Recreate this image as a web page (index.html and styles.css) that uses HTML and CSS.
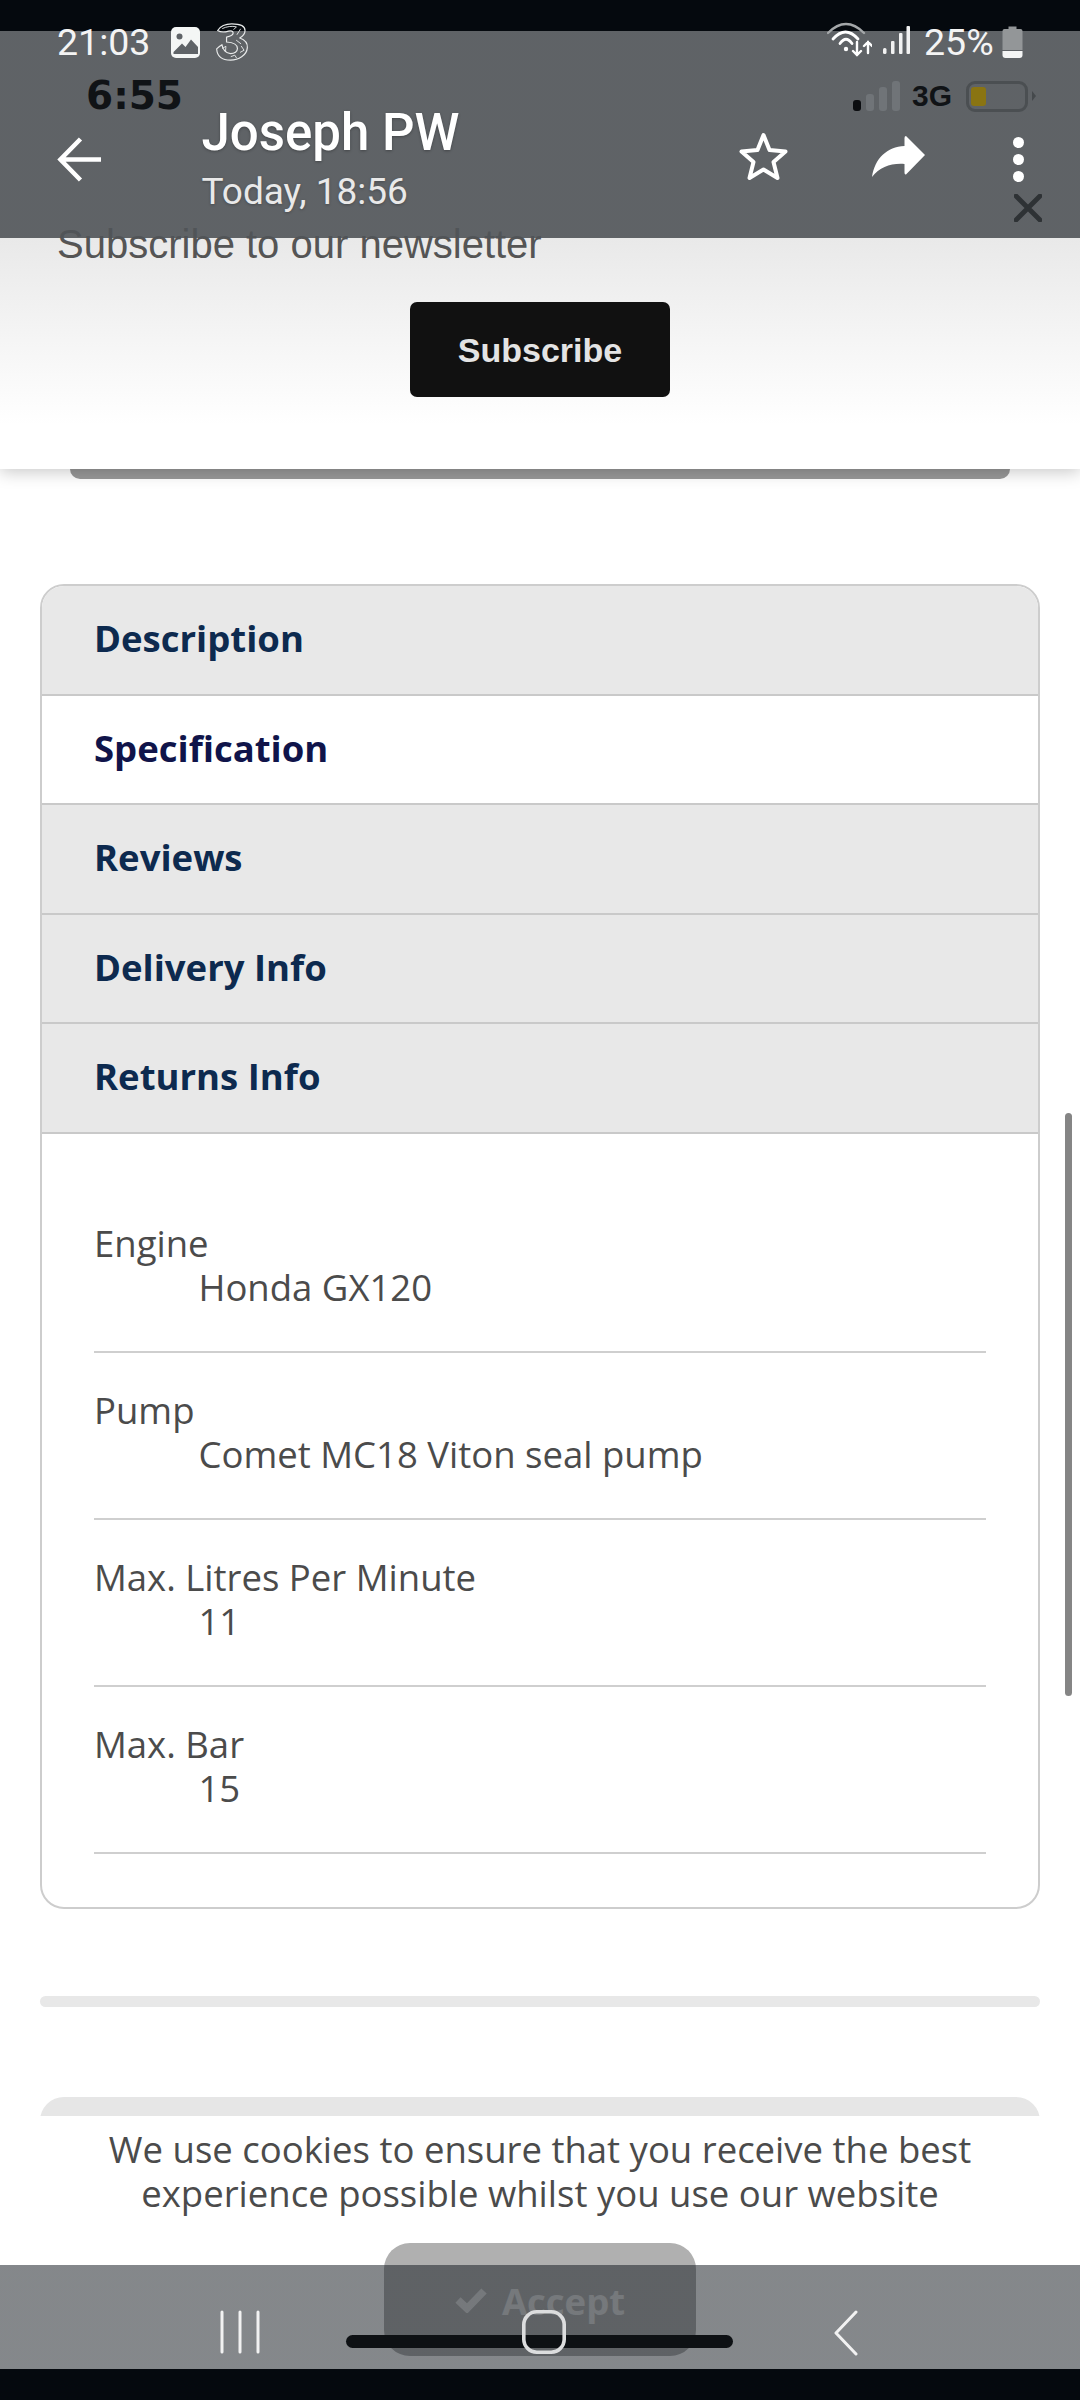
FILE: index.html
```html
<!DOCTYPE html>
<html lang="en">
<head>
<meta charset="utf-8">
<title>Specification</title>
<link rel="stylesheet" href="styles.css">
</head>
<body>
<div class="screen">
  <main class="page">
    <section class="newsletter">
      <p class="newsletter-title">Subscribe to our newsletter</p>
      <button class="subscribe">Subscribe</button>
    </section>
    <div class="cut-bar"></div>
    <section class="card">
      <div class="tab">Description</div>
      <div class="tab tab-active">Specification</div>
      <div class="tab">Reviews</div>
      <div class="tab">Delivery Info</div>
      <div class="tab">Returns Info</div>
      <dl class="specs">
        <div class="spec"><dt>Engine</dt><dd>Honda GX120</dd></div>
        <div class="spec"><dt>Pump</dt><dd>Comet MC18 Viton seal pump</dd></div>
        <div class="spec"><dt>Max. Litres Per Minute</dt><dd>11</dd></div>
        <div class="spec"><dt>Max. Bar</dt><dd>15</dd></div>
      </dl>
    </section>
    <div class="thin-bar"></div>
    <div class="next-card"></div>
  </main>

  <div class="scrollbar"></div>

  <header class="chrome">
    <div class="status">
      <span class="clock">21:03</span>
      <svg class="ic-gallery" viewBox="0 0 29 31"><rect width="29" height="31" rx="5" fill="#f4f6f5"/><circle cx="8.5" cy="9.5" r="3" fill="#5f6367"/><path d="M2.5 25 L11 16.5 L14.5 20 L20 12.5 L27 20 V27 H2.5Z" fill="#5f6367"/></svg>
      <svg class="ic-three" viewBox="-2 -2 100 114" fill="none" stroke="#e8eaea" stroke-width="3.6" stroke-linecap="round" stroke-linejoin="round"><path d="M3 20 C12 6 28 0 46 0 C66 0 86 2 86 20 C86 30 78 38 70 43 C84 48 94 58 93 72 C91 96 66 110 42 110 C20 110 2 102 0 76 C6 70 11 66 16 63 C18 78 28 90 42 90 C54 90 63 84 63 75 C63 62 46 56 30 55 L30 40 C40 38 50 36 50 28 C50 22 44 20 36 22 C26 25 12 26 3 20Z"/><path d="M18 14 C30 8 46 6 60 9 L52 17 M72 16 L62 32 M18 74 L28 68 L27 82 M60 50 L73 60 M44 99 L55 95 L60 103 M75 68 L83 80 L72 86" stroke-width="2.8"/></svg>
      <span class="status-right">
        <svg class="ic-wifi" viewBox="0 0 45 35" fill="none" stroke-linecap="round"><path d="M1 11 Q19 -7 37 11" stroke="#a4a7a9" stroke-width="2.4"/><path d="M6 17 Q18.500 3 31 17" stroke="#fff" stroke-width="2.8"/><path d="M13 21.500 Q19 13 25 21.500" stroke="#fff" stroke-width="2.8"/><circle cx="19" cy="27" r="2.200" fill="#fff"/><path d="M30 20 V33 M26 29 L30 33 L34 29 M41 31 V20 M37 24 L41 20 L45 24" stroke="#fff" stroke-width="2.400"/></svg>
        <svg class="ic-signal" viewBox="0 0 27 28" fill="#f2f2f2"><rect x="0" y="22" width="3.500" height="6" rx="1.500"/><rect x="8" y="15" width="3.500" height="13" rx="1"/><rect x="16" y="7" width="3.500" height="21" rx="1"/><rect x="23.500" y="0" width="3.500" height="28" rx="1"/></svg>
        <span class="percent">25%</span>
        <svg class="ic-battery" viewBox="0 0 20 32"><path d="M6 0.5 H14 V3 H18 Q20 3 20 5 V24 H0 V5 Q0 3 2 3 H6Z" fill="#939698"/><path d="M0 25 H20 V29 Q20 32 17 32 H3 Q0 32 0 29Z" fill="#f4f5f5"/></svg>
      </span>
    </div>
    <div class="status-under">
      <span class="clock-under">6:55</span>
      <span class="under-right">
        <span class="bars">
          <i class="bar bar-on"></i><i class="bar bar-2"></i><i class="bar bar-3"></i><i class="bar bar-4"></i>
        </span>
        <span class="net">3G</span>
        <span class="batt"><i class="batt-fill"></i></span>
        <i class="batt-nub"></i>
      </span>
    </div>
    <div class="appbar">
      <svg class="ic-back" viewBox="0 0 46 46" fill="none" stroke="#fff" stroke-width="4.6"><path d="M45 23 H4 M24 2 L3.5 23 L24 44"/></svg>
      <div class="sender">
        <div class="sender-name">Joseph PW</div>
        <div class="sender-time">Today, 18:56</div>
      </div>
      <div class="actions">
        <svg class="ic-star" viewBox="0 0 50 48" fill="none" stroke="#fff" stroke-width="4" stroke-linejoin="round"><path d="M25 3 L31 18 L47 19.5 L35 30 L39 46 L25 37.5 L11 46 L15 30 L3 19.5 L19 18Z"/></svg>
        <svg class="ic-share" viewBox="0 0 54 41" fill="#fff"><path d="M35 0 L54 19 L35 38.500 Q33.500 39 33.500 36.500 V28 C20 27 9 31 1 41 C4 22 16 11 33.500 10 V2 Q33.500 0 35 0Z"/></svg>
        <span class="dots"><i></i><i></i><i></i></span>
      </div>
    </div>
    <svg class="ic-close" viewBox="0 0 28 28" fill="none" stroke="#2e3235" stroke-width="4.8" stroke-linecap="round"><path d="M2 2 L26 26 M26 2 L2 26"/></svg>
  </header>

  <section class="cookie">
    <p class="cookie-text">We use cookies to ensure that you receive the best experience possible whilst you use our website</p>
    <button class="accept">
      <svg class="ic-tick" viewBox="0 0 32 25" fill="none" stroke="#e0e0e0" stroke-width="7.500"><path d="M3 12 L12 20.500 L29 3"/></svg>
      <span>Accept</span>
    </button>
  </section>

  <nav class="navbar">
    <div class="nav-icons">
      <svg class="ic-recent" viewBox="0 0 40 44" stroke="#f2f2f2" stroke-width="3" stroke-linecap="round"><path d="M2 2 V42 M20 2 V42 M38 2 V42"/></svg>
      <svg class="ic-home" viewBox="0 0 44 44" fill="none" stroke="#dcddde" stroke-width="3.600"><rect x="1.800" y="1.800" width="40.400" height="40.400" rx="13"/></svg>
      <svg class="ic-chev" viewBox="0 0 24 46" fill="none" stroke="#f2f2f2" stroke-width="3" stroke-linecap="round" stroke-linejoin="round"><path d="M22 2 L2 23 L22 44"/></svg>
    </div>
    <div class="pill"></div>
  </nav>
</div>
</body>
</html>
```
FILE: styles.css
```css
* { box-sizing: border-box; }
html, body { margin: 0; padding: 0; background: #05090e; }
.screen {
  position: relative;
  width: 1080px;
  height: 2400px;
  overflow: hidden;
  background: #fff;
  font-family: "Open Sans", sans-serif;
}

/* page */
.page { display: flex; flex-direction: column; }
.newsletter {
  position: relative;
  z-index: 1;
  height: 469px;
  padding-top: 220px;
  display: flex;
  flex-direction: column;
  align-items: flex-start;
  background: linear-gradient(#e9e9e9 238px, #fff 425px);
  box-shadow: 0 3px 16px rgba(0, 0, 0, .22);
}
.newsletter-title {
  margin: 0 0 0 57px;
  font: 40px/48px "Liberation Sans", sans-serif;
  color: #555;
}
.subscribe {
  align-self: center;
  margin: 34px 0 0 0;
  padding: 2px 0 0;
  width: 260px;
  height: 95px;
  border: 0;
  border-radius: 7px;
  background: #111;
  color: #e4e4e4;
  font: bold 34px "Liberation Sans", sans-serif;
}
.cut-bar {
  height: 10px;
  margin: 0 70px;
  background: #999;
  border-radius: 0 0 14px 14px;
}
.card {
  margin: 105px 40px 0;
  height: 1325px;
  border: 2px solid #cdcdcd;
  border-radius: 24px;
  overflow: hidden;
}
.tab {
  height: 109.600px;
  padding-left: 52px;
  border-bottom: 2px solid #c9c9c9;
  background: #e8e8e8;
  color: #0d2a4f;
  font-weight: 700;
  font-size: 36.500px;
  line-height: 105px;
}
.tab-active { background: #fff; color: #10144a; }
.specs { margin: 0; padding: 52px 52px 0; }
.spec {
  height: 167px;
  padding-top: 35.500px;
  border-bottom: 2px solid #cfcfcf;
  color: #4b4b4b;
  font-size: 36.500px;
  line-height: 44px;
}
.spec dt { margin: 0; }
.spec dd { margin: 0 0 0 104.500px; }
.thin-bar {
  height: 11px;
  margin: 87px 40px 0;
  border-radius: 6px;
  background: #e8e8e8;
}
.next-card {
  height: 40px;
  margin: 90px 40px 0;
  border-radius: 24px 24px 0 0;
  background: #e6e6e6;
}
.scrollbar {
  position: absolute;
  left: 1065px;
  top: 1113px;
  width: 7px;
  height: 583px;
  border-radius: 4px;
  background: #858585;
}

/* top chrome */
.chrome {
  position: absolute;
  z-index: 2;
  top: 0;
  left: 0;
  width: 100%;
  height: 238px;
  background: linear-gradient(#05090e 31px, rgba(80, 84, 88, .9) 31px);
  font-family: Roboto, sans-serif;
}
.status {
  display: flex;
  align-items: center;
  height: 38px;
  padding: 0 57px 0 57px;
  position: relative;
  top: 23px;
  color: #f4f4f4;
}
.clock { font-size: 37.500px; line-height: 38px; width: 113px; }
.ic-gallery { width: 31px; height: 31px; }
.ic-three { width: 33px; height: 38px; margin-left: 15px; }
.status-right { margin-left: auto; display: flex; align-items: center; }
.ic-wifi { width: 45px; height: 35px; margin-bottom: 5px; }
.ic-signal { width: 27px; height: 28px; margin: 0 0 4px 11px; }
.percent { font-size: 37.500px; line-height: 38px; margin-left: 14px; width: 78px; }
.ic-battery { width: 21px; height: 32px; }
.status-under {
  position: absolute;
  top: 79px;
  left: 86px;
  right: 44px;
  height: 34px;
  display: flex;
  align-items: center;
  color: #101316;
}
.clock-under { font: 700 39px/34px "DejaVu Sans", sans-serif; }
.under-right { margin-left: auto; display: flex; align-items: center; }
.bars { display: flex; align-items: flex-end; gap: 5px; height: 30px; }
.bar { width: 8px; background: #707478; border-radius: 3px; }
.bar-on { height: 11px; background: #0b0d10; }
.bar-2 { height: 17px; }
.bar-3 { height: 24px; }
.bar-4 { height: 30px; }
.net { font: 700 30px/34px "Liberation Sans", sans-serif; margin-left: 12px; }
.batt {
  width: 62px;
  height: 31px;
  margin-left: 14px;
  padding: 3px 2px;
  border: 3px solid #4b4f52;
  border-radius: 9px;
  display: flex;
}
.batt-fill { width: 15px; background: #8a7412; border-radius: 3px; }
.batt-nub {
  width: 0;
  height: 0;
  margin-left: 4px;
  border-left: 4px solid #45494c;
  border-top: 5px solid transparent;
  border-bottom: 5px solid transparent;
}
.appbar {
  position: absolute;
  top: 112px;
  left: 57px;
  right: 56.500px;
  height: 95px;
  display: flex;
  align-items: center;
}
.ic-back { width: 45px; height: 45px; }
.sender { margin-left: 99.500px; color: #fff; }
.sender-name {
  font-weight: 500;
  font-size: 51px;
  line-height: 50px;
  text-shadow: 0 1px 3px rgba(0, 0, 0, .3);
}
.sender-time {
  margin-top: 14px;
  color: #e9e9e9;
  font-size: 37px;
  line-height: 40px;
  text-shadow: 0 1px 3px rgba(0, 0, 0, .25);
}
.actions { margin-left: auto; display: flex; align-items: center; }
.ic-star { width: 51px; height: 48px; margin-bottom: 7px; }
.ic-share { width: 56px; height: 41px; margin-left: 81px; margin-bottom: 7px; }
.dots { margin-left: 86.500px; display: flex; flex-direction: column; gap: 6px; }
.dots i { width: 11px; height: 11px; border-radius: 50%; background: #fff; }
.ic-close {
  position: absolute;
  top: 194px;
  left: 1014px;
  width: 28px;
  height: 28px;
}

/* cookie banner */
.cookie {
  position: absolute;
  z-index: 2;
  top: 2116px;
  left: 0;
  width: 100%;
  height: 260px;
  background: #fff;
  display: flex;
  flex-direction: column;
  align-items: center;
}
.cookie-text {
  width: 900px;
  margin: 10.500px 0 0;
  color: #4b4b4b;
  font-size: 36.500px;
  line-height: 44px;
  text-align: center;
}
.accept {
  width: 312px;
  height: 113px;
  margin-top: 28.500px;
  border: 0;
  border-radius: 26px;
  background: #b0b0b0;
  color: #e0e0e0;
  font: 700 36.500px "Open Sans", sans-serif;
  padding: 2px 0 0;
  display: flex;
  align-items: center;
  justify-content: center;
  gap: 15px;
}
.ic-tick { width: 32px; height: 25px; }

/* nav */
.navbar {
  position: absolute;
  z-index: 3;
  top: 2265px;
  left: 0;
  width: 100%;
  height: 135px;
  background: linear-gradient(rgba(20, 26, 32, .52) 104px, #05090e 104px);
}
.nav-icons { position: relative; height: 104px; }
.ic-recent, .ic-home, .ic-chev { position: absolute; top: 45px; z-index: 1; }
.ic-recent { left: 220px; width: 40px; height: 44px; }
.ic-home { left: 521.500px; width: 44px; height: 44px; }
.ic-chev { left: 834px; width: 24px; height: 46px; }
.pill {
  position: absolute;
  top: 70px;
  left: 346px;
  width: 387px;
  height: 13px;
  border-radius: 7px;
  background: #0e1114;
}
```
